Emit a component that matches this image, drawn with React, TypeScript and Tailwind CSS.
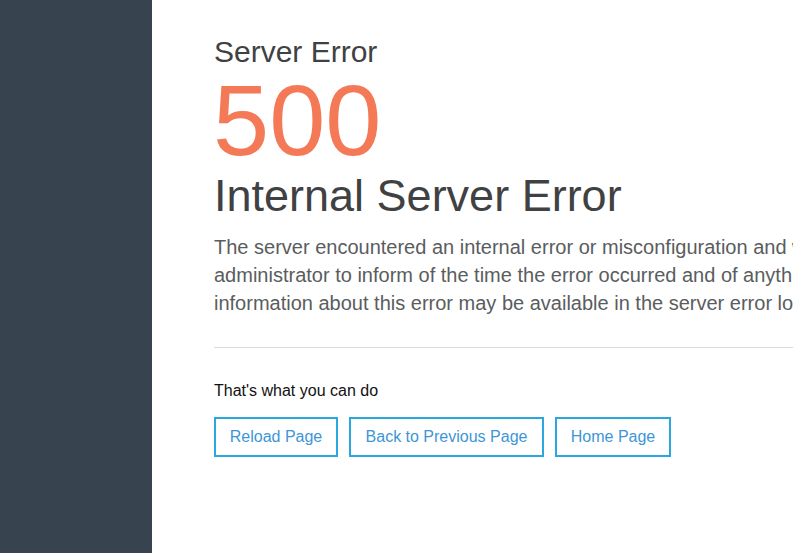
export default function App() {
  return (
    <div className="flex h-[553px] w-[793px] overflow-hidden bg-white font-['Liberation_Sans',Arial,sans-serif]">
      <aside className="w-[152px] shrink-0 bg-[#37434f]" />
      <main className="flex-1 min-w-0 pl-[62px] pt-[35px]">
        <h2 className="text-[30px] leading-[34px] text-[#3f4143]">Server Error</h2>
        <h1 className="text-[101px] leading-[102px] text-[#f47a57] -ml-[1px]">500</h1>
        <h3 className="text-[45px] leading-[50px] text-[#3f4143]">Internal Server Error</h3>
        <p className="mt-[12px] whitespace-nowrap text-[20px] leading-[28px] text-[#5a5d60]">
          <span className="block">
            The server encountered an internal error or misconfiguration and was unable to complete your request. Please contact the server
          </span>
          <span className="block">
            administrator to inform of the time the error occurred and of anything you might have done that may have caused the error. More
          </span>
          <span className="block">information about this error may be available in the server error log.</span>
        </p>
        <hr className="mt-[30px] border-t border-[#dcdcdc]" />
        <p className="mt-[33px] text-[16px] leading-[20px] text-[#111]">That's what you can do</p>
        <div className="mt-[16px] flex gap-[11px]">
          <button className="h-[40px] w-[124px] border-2 border-[#2aa7df] text-[16px] text-[#3d96d6]">Reload Page</button>
          <button className="h-[40px] w-[195px] border-2 border-[#2aa7df] text-[16px] text-[#3d96d6]">Back to Previous Page</button>
          <button className="h-[40px] w-[116px] border-2 border-[#2aa7df] text-[16px] text-[#3d96d6]">Home Page</button>
        </div>
      </main>
    </div>
  );
}
